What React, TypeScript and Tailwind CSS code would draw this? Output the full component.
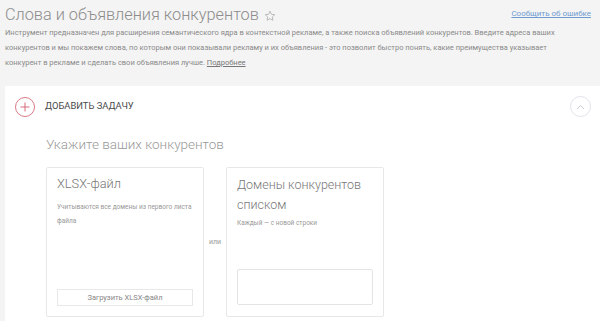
import React from "react";

export default function App() {
  return (
    <div className="w-[600px] h-[321px] overflow-hidden bg-[#f4f4f4] text-[#8a8a8a]" style={{ fontFamily: "Roboto, 'Noto Sans', sans-serif" }}>
      <div className="pl-[5px] pr-[9px] pt-[1px]">
        <div className="flex items-start justify-between">
          <div className="flex items-center">
            <h1 className="text-[16.3px] leading-[28px] font-light text-[#8c8c8c]">Слова и объявления конкурентов</h1>
            <svg className="ml-[5px] mt-[1px]" width="12" height="12" viewBox="0 0 24 24" fill="none" stroke="#a8a8a8" strokeWidth="1.5" strokeLinejoin="round">
              <path d="M12 2.5l2.9 6.1 6.6.8-4.9 4.6 1.3 6.6L12 17.3l-5.9 3.3 1.3-6.6-4.9-4.6 6.6-.8z" />
            </svg>
          </div>
          <a className="mt-[7px] text-[8px] leading-[12px] text-[#6e9bd0] underline">Сообщить об ошибке</a>
        </div>
        <p className="w-[578px] text-[7.5px] leading-[15px] text-[#8a8a8a] mt-[-4px]">
          Инструмент предназначен для расширения семантического ядра в контекстной рекламе, а также поиска объявлений конкурентов. Введите адреса ваших конкурентов и мы покажем слова, по которым они показывали рекламу и их объявления - это позволит быстро понять, какие преимущества указывает конкурент в рекламе и сделать свои объявления лучше. <a className="underline text-[#777]">Подробнее</a>
        </p>
      </div>
      <div className="ml-[5px] mt-[16px] bg-white h-[300px]">
        <div className="flex items-center justify-between pl-[10px] pr-[9px] pt-[10px]">
          <div className="flex items-center">
            <div className="w-[20px] h-[20px] rounded-full border border-[#d97a86] flex items-center justify-center">
              <svg width="10" height="10" viewBox="0 0 10 10" stroke="#d46a78" strokeWidth="1">
                <path d="M5 0.5v9M0.5 5h9" />
              </svg>
            </div>
            <span className="ml-[10px] text-[9.4px] text-[#4a4a4a] uppercase">Добавить задачу</span>
          </div>
          <div className="w-[21px] h-[21px] rounded-full border border-[#e2e4ea] flex items-center justify-center">
            <svg width="9" height="6" viewBox="0 0 9 6" fill="none" stroke="#c8ccd4" strokeWidth="1">
              <path d="M1 5l3.5-3.5L8 5" />
            </svg>
          </div>
        </div>
        <div className="pl-[41px] pt-[17px]">
          <h2 className="text-[13.5px] leading-[20px] text-[#999] font-light">Укажите ваших конкурентов</h2>
          <div className="flex items-center mt-[13px]">
            <div className="w-[158px] h-[150px] border border-[#e8e8e8] rounded-[2px] px-[10px] pt-[6px] pb-[10px] flex flex-col">
              <div className="text-[12.8px] leading-[20px] text-[#777] font-light">XLSX-файл</div>
              <div className="text-[6.5px] leading-[14px] text-[#999] mt-[6px]">Учитываются все домены из первого листа файла</div>
              <div className="mt-auto h-[17px] border border-[#e8e8e8] flex items-center justify-center text-[7.5px] text-[#888]">Загрузить XLSX-файл</div>
            </div>
            <div className="w-[22px] text-center text-[7px] text-[#9a9a9a]">или</div>
            <div className="w-[158px] h-[150px] border border-[#e8e8e8] rounded-[2px] px-[10px] pt-[7px] pb-[11px] flex flex-col">
              <div className="text-[12.5px] leading-[20px] text-[#777] font-light">Домены конкурентов списком</div>
              <div className="text-[6.5px] leading-[14px] text-[#999] mt-[1px]">Каждый — с новой строки</div>
              <div className="mt-auto h-[36px] border border-[#e4e4e4] rounded-[2px]"></div>
            </div>
          </div>
        </div>
      </div>
    </div>
  );
}
